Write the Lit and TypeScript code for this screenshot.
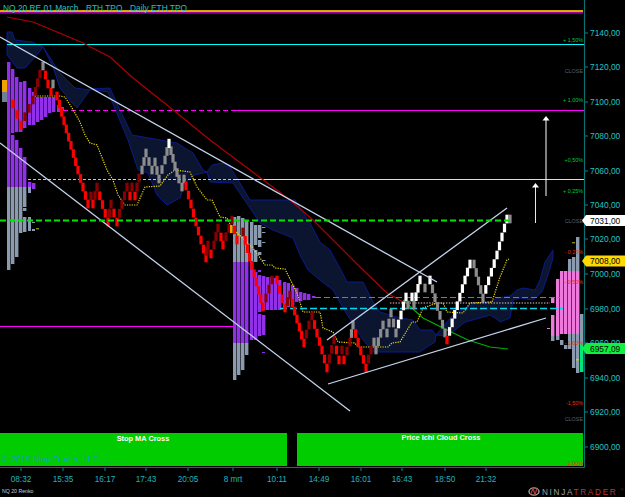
import { LitElement, html, svg, css } from "lit";
import { customElement } from "lit/decorators.js";

type Pt = [number, number];

const BRICK = 8.65;

// renko path: x, y, section (r = red, g = grey, w = white rising)
const WAYPOINTS: [number, number, string][] = [
  [7, 94, "r"], [13, 104, "r"], [21, 125, "r"], [33, 100, "r"], [40, 74, "r"],
  [43, 66, "g"], [48, 84, "r"], [51, 92, "r"], [53, 84, "g"], [57, 96, "r"],
  [78, 170, "r"], [88, 204, "r"], [91, 196, "r"], [93, 204, "r"], [97, 187, "r"],
  [108, 222, "r"], [111, 204, "r"], [117, 222, "r"], [127, 187, "r"], [130, 196, "r"],
  [132, 187, "r"], [135, 196, "r"], [139, 178, "r"], [142, 170, "g"], [146, 153, "g"],
  [152, 170, "g"], [155, 162, "g"], [159, 179, "g"], [165, 160, "g"], [169, 143, "g"],
  [175, 166, "g"], [179, 179, "g"], [182, 187, "g"], [184, 179, "g"], [186, 186, "r"],
  [206, 258, "r"], [208, 245, "r"], [211, 254, "r"], [214, 245, "r"], [218, 228, "r"],
  [221, 237, "r"], [223, 245, "r"], [232, 220, "r"], [237, 240, "r"], [243, 232, "r"],
  [263, 307, "r"], [272, 280, "r"], [277, 280, "r"], [285, 308, "r"], [290, 295, "r"],
  [304, 343, "r"], [309, 325, "r"], [312, 316, "r"], [322, 350, "r"], [327, 368, "r"],
  [334, 340, "r"], [339, 360, "r"], [342, 350, "r"], [344, 360, "r"], [350, 342, "r"],
  [353, 325, "g"], [366, 368, "r"], [371, 350, "r"], [374, 342, "g"], [376, 350, "g"],
  [383, 325, "g"], [387, 333, "g"], [391, 313, "g"], [396, 333, "g"], [406, 297, "w"],
  [408, 305, "g"], [412, 297, "w"], [414, 305, "g"], [420, 280, "w"], [425, 288, "g"],
  [430, 280, "w"], [445, 333, "g"], [447, 340, "r"], [465, 280, "w"], [470, 264, "w"],
  [474, 264, "w"], [483, 298, "g"], [497, 255, "w"], [507, 219, "w"], [510, 219, "g"],
];

const PURPLE: [number, number, number, number][] = [
  [7, 62, 187, 3.4], [11, 69, 133, 3.4], [11, 135, 187, 3.4], [15, 77, 132, 3.4],
  [15, 140, 187, 3.4], [19, 82, 132, 3.4], [19, 148, 187, 3.4], [23, 81, 128, 3.4],
  [23, 157, 187, 3.4], [28, 88, 125, 3.4], [28, 182, 187, 3.4], [32, 92, 125, 3.4],
  [32, 183, 189, 3.4], [36, 97, 122, 3.4], [40, 97, 120, 3.4], [44, 97, 117, 3.4],
  [48, 97, 113, 3.4], [52, 97, 112, 3.4], [57, 105, 112, 3.4], [61, 107, 111, 3],
  [233, 262, 343, 3.4], [237, 262, 343, 3.4], [241, 262, 343, 3.4], [245, 262, 343, 3.4],
  [250, 262, 340, 3.4], [254, 272, 340, 3.4], [258, 275, 312, 3.4], [258, 314, 336, 3.4],
  [262, 276, 310, 3.4], [262, 315, 335, 3.4], [266, 277, 310, 3.4], [270, 277, 310, 3.4],
  [274, 278, 310, 3.4], [278, 280, 310, 3.4], [283, 282, 308, 3.4], [287, 283, 307, 3],
  [291, 285, 305, 3.4], [295, 288, 302, 3.4], [299, 292, 301, 3.4], [303, 293, 300, 3.4],
  [307, 294, 300, 3.4], [312, 296, 298, 3.4], [258, 270, 272, 3], [262, 352, 353, 3],
];

const SLATE: [number, number, number, number][] = [
  [7, 187, 270, 3.4], [11, 187, 264, 3.4], [15, 187, 257, 3.4], [19, 187, 233, 3.4],
  [23, 187, 207, 3.4], [23, 208, 211, 3.4], [23, 217, 232, 3.4], [28, 187, 193, 3],
  [28, 217, 231, 3], [32, 222, 223, 3], [32, 229, 231, 3],
  [233, 217, 262, 3.4], [237, 216, 262, 3.4], [241, 218, 262, 3.4], [245, 220, 262, 3.4],
  [250, 222, 262, 3.4], [254, 225, 245, 3.4], [254, 250, 262, 3.4], [258, 225, 238, 3.4],
  [258, 240, 247, 3.4], [258, 252, 255, 3.4], [262, 227, 228, 3.4], [262, 232, 233, 3.4],
  [262, 242, 243, 3.4], [262, 260, 261, 3.4], [233, 343, 380, 3.4], [237, 343, 375, 3.4],
  [241, 343, 370, 3.4], [245, 343, 355, 3.4],
  [551, 336, 341, 3.4], [556, 336, 340, 3.4], [560, 340, 345, 3.4], [564, 345, 349, 3.4],
  [568, 259, 271, 3.4], [568, 334, 349, 3.4], [572, 257, 271, 3.4], [572, 334, 368, 3.4],
  [576, 237, 271, 3.4], [576, 334, 373, 3.4], [580, 314, 343, 3.4],
];

const PINK: [number, number, number, number][] = [
  [551, 297, 303, 3.4], [551, 315, 336, 3.4], [556, 279, 336, 3.4], [560, 271, 334, 3.4],
  [564, 271, 334, 3.4], [568, 271, 334, 3.4], [572, 271, 334, 3.4], [576, 271, 334, 3.4],
  [547, 328, 329, 3],
];

const CLOUDS: Pt[][] = [
  [[7, 32], [12, 32], [15, 40], [32, 42], [43, 47], [35, 57], [25, 68], [17, 68], [7, 55]],
  [[43, 47], [60, 73], [75, 88], [90, 90], [77, 108], [72, 103], [60, 88], [53, 67]],
  [[90, 89], [110, 88], [120, 110], [132, 135], [177, 143], [193, 153], [203, 170], [207, 172],
    [195, 175], [185, 183], [180, 198], [167, 205], [157, 195], [148, 173], [138, 170], [128, 140], [108, 92]],
  [[207, 172], [212, 165], [222, 163], [230, 167], [240, 183], [250, 200], [295, 200], [310, 223],
    [320, 242], [330, 250], [341, 270], [347, 282], [363, 282], [373, 302], [380, 312], [400, 318],
    [413, 320], [420, 330], [432, 330], [436, 335], [435, 342], [427, 347], [420, 352], [373, 352],
    [363, 340], [343, 308], [333, 290], [320, 280], [308, 270], [300, 255], [293, 238], [273, 230],
    [260, 223], [233, 183], [210, 182]],
  [[436, 335], [452, 316], [463, 309], [475, 303], [490, 302], [498, 298], [510, 296], [517, 290],
    [523, 288], [535, 290], [540, 280], [545, 262], [553, 250], [553, 258], [548, 275], [542, 292],
    [533, 300], [520, 298], [513, 300], [510, 318], [500, 322], [495, 318], [490, 315], [480, 318],
    [465, 322], [455, 330], [445, 336]],
];

const YELLOW: Pt[] = [
  [35, 96], [60, 96], [65, 97], [72, 108], [80, 122], [85, 135], [90, 143], [97, 145], [103, 160],
  [107, 170], [113, 180], [118, 195], [125, 205], [137, 205], [145, 187], [160, 186], [168, 175],
  [175, 170], [190, 172], [197, 187], [207, 200], [212, 200], [220, 217], [227, 218], [232, 228],
  [253, 248], [265, 265], [272, 265], [275, 268], [285, 269], [297, 293], [303, 312], [320, 312],
  [323, 328], [333, 332], [338, 342], [355, 343], [358, 347], [388, 347], [392, 343], [400, 342],
  [412, 322], [417, 322], [423, 308], [437, 303], [443, 303], [447, 312], [463, 313], [470, 303],
  [492, 302], [500, 277], [507, 260], [509, 259],
];

const MA_RED: Pt[] = [
  [7, 17], [33, 22], [57, 32], [83, 43], [110, 57], [133, 78], [167, 105], [210, 140], [250, 170],
  [290, 200], [313, 220], [360, 267], [387, 293], [405, 303],
];
const MA_GREEN: Pt[] = [[403, 300], [423, 318], [447, 330], [468, 340], [490, 347], [508, 349]];

const PRICES: [string, number][] = [
  ["7140,00", 33], ["7120,00", 67], ["7100,00", 102], ["7080,00", 136], ["7060,00", 171],
  ["7040,00", 205], ["7020,00", 239], ["7000,00", 274], ["6980,00", 309], ["6960,00", 343],
  ["6940,00", 378], ["6920,00", 412], ["6900,00", 447],
];

const TIMES: [string, number][] = [
  ["08:32", 21], ["15:35", 63], ["16:17", 105], ["17:43", 146], ["20:05", 188], ["8 mrt", 233],
  ["10:11", 277], ["14:49", 319], ["16:01", 361], ["16:43", 402], ["18:50", 445], ["21:32", 486],
];

const LEVELS: [string, number, string][] = [
  ["+ 1,50%", 40, "up"], ["CLOSE", 71, "close"], ["+ 1,00%", 100, "up"], ["+0,50%", 160, "up"],
  ["+ 0,25%", 191, "up"], ["CLOSE", 221, "close"], ["- 0,25%", 252, "down"], ["- 0,50%", 282, "down"],
  ["- 1,00%", 343, "down"], ["-1,50%", 403, "down"], ["CLOSE", 419, "close"], ["-2,00%", 463, "down"],
];

const TAGS: [string, number, string][] = [
  ["7031,00", 220.5, "tag-white"],
  ["7008,00", 261, "tag-yellow"],
  ["6957,09", 348.5, "tag-green"],
];

function bricks() {
  const out: { x: number; y: number; cls: string }[] = [];
  for (let i = 1; i < WAYPOINTS.length; i++) {
    const [x0, y0] = WAYPOINTS[i - 1];
    const [x1, y1, kind] = WAYPOINTS[i];
    const n = Math.max(1, Math.round(Math.abs(y1 - y0) / BRICK));
    const up = y1 < y0;
    for (let k = 1; k <= n; k++) {
      let cls = "b-grey";
      if (kind === "r") cls = up ? "b-dark" : "b-red";
      if (kind === "w") cls = up ? "b-white" : "b-grey";
      out.push({ x: x0 + ((x1 - x0) * k) / n, y: y0 + ((y1 - y0) * k) / n, cls });
    }
  }
  return out;
}

const pts = (list: Pt[]) => list.map((p) => p.join(",")).join(" ");

@customElement("app-root")
export class AppRoot extends LitElement {
  static styles = css`
    :host {
      display: block;
      width: 625px;
      height: 497px;
      background: #000;
      overflow: hidden;
    }
    svg {
      display: block;
      font-family: "Liberation Sans", Arial, sans-serif;
    }
    .cloud { fill: #0c1530; stroke: #0a1a8c; stroke-width: 1; }
    .b-red { fill: #ff0000; }
    .b-dark { fill: #8b0000; }
    .b-grey { fill: #8c8c8c; }
    .b-white { fill: #ffffff; }
    .purple { fill: #9030e8; }
    .slate { fill: #8a9bb0; }
    .pink { fill: #ee78dc; }
    .teal-bar { fill: #00e878; }
    .olive { fill: #8a8a00; }
    .trend { stroke: #c4d4ee; stroke-width: 1.3; fill: none; }
    .ma-red { stroke: #b00000; stroke-width: 1.2; fill: none; }
    .ma-green { stroke: #00b000; stroke-width: 1.2; fill: none; }
    .dots { stroke: #f4e000; stroke-width: 1.2; stroke-dasharray: 1.2 1.2; fill: none; }
    .axis { stroke: #0a7070; stroke-width: 1.2; }
    .price { fill: #22c4c4; font-size: 8.4px; }
    .time { fill: #22b4b8; font-size: 8.2px; text-anchor: middle; }
    .level { font-size: 5.4px; text-anchor: end; }
    .level.up { fill: #00c83c; }
    .level.down { fill: #e83008; }
    .level.close { fill: #586068; }
    .title { fill: #20c0c0; font-size: 8.4px; }
    .signal { fill: #00cc00; }
    .signal-text { fill: #fff; font-size: 7.4px; font-weight: 700; text-anchor: middle; }
    .copy { fill: #1aa0b8; font-size: 8.8px; }
    .watermark { fill: #12b83a; font-size: 4.2px; }
    .symbol { fill: #ccc; font-size: 5.2px; }
    .tag-text { fill: #000; font-size: 8.4px; }
    .tag-white { fill: #fff; }
    .tag-yellow { fill: #ffd800; }
    .tag-green { fill: #10f040; }
    .logo { font-size: 8.2px; letter-spacing: 1.7px; }
    .logo-a { fill: #a0a0a0; }
    .logo-b { fill: #b83838; }
    .logo-mark { font-size: 3px; fill: #b83838; }
  `;

  private rects(list: [number, number, number, number][], cls: string) {
    return list.map(
      ([x, top, bottom, w]) =>
        svg`<rect class=${cls} x=${x} y=${top} width=${w} height=${bottom - top}></rect>`,
    );
  }

  render() {
    return html`
      <svg width="625" height="497" viewBox="0 0 625 497">
        ${CLOUDS.map((c) => svg`<polygon class="cloud" points=${pts(c)}></polygon>`)}

        <!-- horizontal levels -->
        <rect x="0" y="10" width="583" height="1" fill="#d8a800"></rect>
        <rect x="0" y="11" width="583" height="1" fill="#c0c000"></rect>
        <rect x="0" y="12" width="583" height="1.6" fill="#a000a0"></rect>
        <line x1="7" y1="44.5" x2="584" y2="44.5" stroke="#00ffff"></line>
        <line x1="63" y1="110.5" x2="233" y2="110.5" stroke="#ff00ff" stroke-dasharray="5 3"></line>
        <line x1="233" y1="110.5" x2="584" y2="110.5" stroke="#ff00ff"></line>
        <line x1="28" y1="179.5" x2="233" y2="179.5" stroke="#70e8ec" stroke-dasharray="3 2"></line>
        <line x1="233" y1="179.5" x2="584" y2="179.5" stroke="#b0f0f0"></line>
        <line x1="0" y1="326.5" x2="233" y2="326.5" stroke="#ff00ff"></line>

        ${this.rects(PURPLE, "purple")} ${this.rects(SLATE, "slate")} ${this.rects(PINK, "pink")}
        <rect class="teal-bar" x="580" y="343" width="3.4" height="29"></rect>
        <rect class="olive" x="36" y="228" width="3" height="1.4"></rect>
        <rect class="olive" x="572" y="242" width="3" height="1.4"></rect>
        <rect x="576" y="359" width="3" height="1.4" fill="#d8d000"></rect>
        <rect x="2" y="80" width="5" height="12" fill="#f0a000"></rect>
        <rect x="2" y="92" width="5" height="10" fill="#708090"></rect>

        <polyline class="ma-red" points=${pts(MA_RED)}></polyline>
        <polyline class="ma-green" points=${pts(MA_GREEN)}></polyline>
        <polyline class="dots" points=${pts(YELLOW)}></polyline>

        <line x1="315" y1="297.5" x2="560" y2="297.5" stroke="#ff20ff" stroke-dasharray="6 3"></line>
        <line x1="390" y1="303" x2="550" y2="303" stroke="#e8c8c8" stroke-width="1.2" stroke-dasharray="1.4 1.4"></line>
        <line x1="280" y1="308.5" x2="563" y2="308.5" stroke="#00d8f0" stroke-width="1.4" stroke-dasharray="7 3"></line>

        ${bricks().map(
          (b) => svg`<rect class=${b.cls} x=${b.x - 1.6} y=${b.y - BRICK / 2} width="3.2" height=${BRICK}></rect>`,
        )}
        <rect x="230" y="225" width="2.6" height="8" fill="#ffa000"></rect>
        <rect x="167.6" y="139" width="2.8" height="9" fill="#fff"></rect>

        <line class="trend" x1="0" y1="37" x2="437" y2="282"></line>
        <line class="trend" x1="0" y1="143" x2="350" y2="411"></line>
        <line class="trend" x1="327" y1="340" x2="507" y2="208"></line>
        <line class="trend" x1="328" y1="384" x2="546" y2="318"></line>

        <line x1="0" y1="220.5" x2="511" y2="220.5" stroke="#00e600" stroke-width="1.8" stroke-dasharray="6 3"></line>

        <!-- arrows -->
        <line x1="546" y1="118" x2="546" y2="196" stroke="#fff"></line>
        <polygon points="546,116 542.5,120.5 549.5,120.5" fill="#fff"></polygon>
        <line x1="535.5" y1="185" x2="535.5" y2="223" stroke="#e8e8e8"></line>
        <polygon points="535.5,183 532,187.5 539,187.5" fill="#fff"></polygon>

        <!-- signal strips -->
        <rect class="signal" x="0" y="433" width="287" height="33"></rect>
        <rect class="signal" x="297" y="433" width="286" height="33"></rect>
        <text class="signal-text" x="143" y="440.6">Stop MA Cross</text>
        <text class="signal-text" x="441" y="440">Price Ichi Cloud Cross</text>
        <text class="copy" x="2" y="461.5">© 2019 NinjaTrader, LLC.</text>
        <text class="watermark" x="100" y="462.5">www.finvig.com</text>

        <text class="title" x="3" y="11">NQ 20 RE 01 March</text>
        <text class="title" x="86" y="11">RTH TPO</text>
        <text class="title" x="130" y="11">Daily ETH TPO</text>

        ${LEVELS.map(([t, y, k]) => svg`<text class="level ${k}" x="583" y=${y + 2}>${t}</text>`)}

        <!-- axes -->
        <line class="axis" x1="584.5" y1="0" x2="584.5" y2="467.5"></line>
        <line class="axis" x1="0" y1="467.5" x2="584.5" y2="467.5"></line>
        ${PRICES.map(
          ([t, y]) => svg`
            <line class="axis" x1="585" y1=${y} x2="588" y2=${y}></line>
            <text class="price" x="590" y=${y + 3}>${t}</text>`,
        )}
        ${TIMES.map(
          ([t, x]) => svg`
            <line class="axis" x1=${x} y1="467" x2=${x} y2="471"></line>
            <text class="time" x=${x} y="482">${t}</text>`,
        )}

        ${TAGS.map(
          ([t, y, cls]) => svg`
            <polygon class=${cls} points="582,${y} 586,${y - 5.5} 625,${y - 5.5} 625,${y + 5.5} 586,${y + 5.5}"></polygon>
            <text class="tag-text" x="590" y=${y + 3}>${t}</text>`,
        )}

        <text class="symbol" x="2" y="493">NQ 20 Renko</text>

        <!-- logo -->
        <ellipse cx="534" cy="491.5" rx="5" ry="3.6" fill="none" stroke="#a0a0a0" stroke-width="1.4"></ellipse>
        <path d="M530.6 494.5 L533 488.5 L535 494.5 L537 488.5" fill="none" stroke="#b83838" stroke-width="1.2"></path>
        <text class="logo" x="542" y="494.8"><tspan class="logo-a">NINJA</tspan><tspan class="logo-b">TRADER</tspan></text>
        <text class="logo-mark" x="621" y="491">®</text>
      </svg>
    `;
  }
}

declare global {
  interface HTMLElementTagNameMap {
    "app-root": AppRoot;
  }
}
